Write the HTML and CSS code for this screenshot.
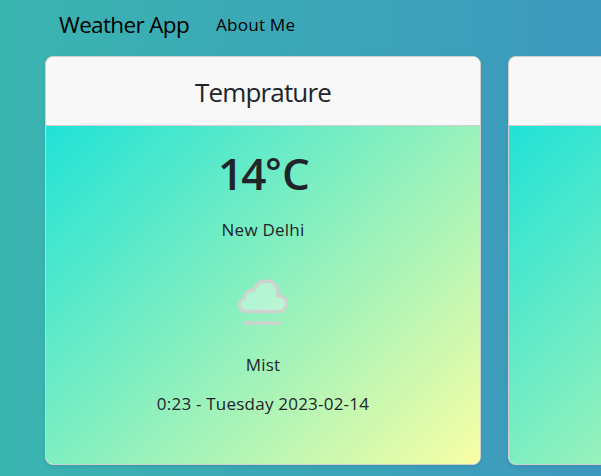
FILE: index.html
```html
<!DOCTYPE html>
<html lang="en">
<head>
<meta charset="utf-8">
<title>Weather App</title>
<link rel="stylesheet" href="styles.css">
</head>
<body>
<nav class="navbar">
  <a class="brand">Weather App</a>
  <a class="nav-link">About Me</a>
</nav>
<main class="cards">
  <section class="card">
    <header class="card-header"><h4 class="card-heading">Temprature</h4></header>
    <div class="card-body">
      <h1 class="temp">14<span class="degree">°</span>C</h1>
      <p class="place">New Delhi</p>
      <svg class="icon" width="54" height="54" viewBox="0 0 54 54">
        <path class="cloud" d="M10 36.500C5.500 36.500 3.500 33.500 3.500 30C3.500 26.500 5.500 24.500 8.500 23.500C8 18.500 12 14.500 17.500 15.500C20 9 24 6 30 6C37.500 6 43.500 12 41.500 20.500C47 20.500 50.500 24 50.500 28.500C50.500 33.500 47 36.500 42.500 36.500Z"/>
        <path class="mist" d="M8 48H46"/>
      </svg>
      <p class="condition">Mist</p>
      <p class="date">0:23 - Tuesday 2023-02-14</p>
    </div>
  </section>
  <section class="card card-next">
    <header class="card-header"></header>
    <div class="card-body"></div>
  </section>
</main>
</body>
</html>
```
FILE: styles.css
```css
* { box-sizing: border-box; }
html {
  background: linear-gradient(to right, #3ab5b0 0, #3d99be 590px, #56317a 1903px);
}
body {
  margin: 0;
  height: 476px;
  overflow: hidden;
  font-family: "Open Sans", sans-serif;
  font-size: 17px;
  letter-spacing: 0.22px;
  color: #212529;
}
h1, h4, p { margin: 0; }
.navbar {
  display: flex;
  align-items: center;
  gap: 27px;
  height: 56px;
  padding: 0 0 6px 59px;
  color: #000;
  line-height: 30px;
}
.brand { font-size: 22.500px; letter-spacing: -0.65px; }
.nav-link { font-size: 17.200px; letter-spacing: 0.15px; }
.cards { display: flex; gap: 27px; padding-left: 45px; }
.card {
  flex: 0 0 436px;
  height: 409px;
  display: flex;
  flex-direction: column;
  border: 1px solid #cfcfcf;
  border-radius: 8px;
  overflow: hidden;
  background: #fff;
  box-shadow: 0 2px 4px rgba(0, 0, 0, 0.075);
  text-align: center;
}
.card-next {
  flex: 0 0 93px;
  border-right: 0;
  border-top-right-radius: 0;
  border-bottom-right-radius: 0;
}
.card-next .card-body { background-size: 434px 339px; }
.card-header {
  height: 69px;
  padding-top: 17px;
  background: #f8f8f8;
  border-bottom: 1px solid #cfcfcf;
}
.card-heading { font-size: 26px; font-weight: 400; line-height: 36px; letter-spacing: -0.85px; }
.card-body {
  flex: 1;
  display: flex;
  flex-direction: column;
  align-items: center;
  padding-top: 21px;
  background: linear-gradient(135deg, #20e2d7 0%, #f9fea5 100%);
}
.temp { font-size: 44px; font-weight: 600; line-height: 52px; letter-spacing: -2px; }
.degree { font-size: 38px; line-height: 1; letter-spacing: 0.5px; margin-left: 1px; vertical-align: 5px; }
.place { line-height: 26px; margin-top: 18px; }
.icon { margin-top: 32px; }
.cloud { fill: rgba(255, 255, 255, 0.35); stroke: #cfd2cf; stroke-width: 3.4; stroke-linejoin: round; }
.mist { stroke: #cfd2cf; stroke-width: 3.6; }
.condition { line-height: 26px; margin-top: 23px; }
.date { line-height: 26px; margin-top: 13px; }
```
